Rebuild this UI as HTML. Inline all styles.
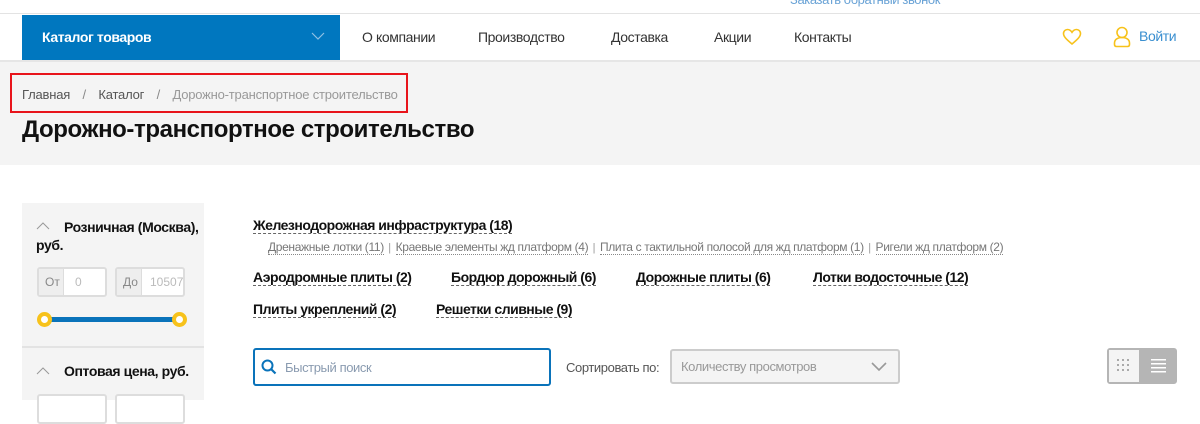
<!DOCTYPE html>
<html><head><meta charset="utf-8"><style>
*{margin:0;padding:0;box-sizing:border-box}
body{width:1200px;height:400px;overflow:hidden;background:#fff;font-family:"Liberation Sans",sans-serif;position:relative;color:#222}
.a{position:absolute;white-space:nowrap}
.n{letter-spacing:-0.4px}
.nav{font-size:14px;color:#333;top:29px}
.cat{font-size:14px;font-weight:bold;border-bottom:1px dashed #666;line-height:16px;letter-spacing:-0.5px;color:#111}
.sub{font-size:12px;color:#777;border-bottom:1px dotted #888;line-height:14px;letter-spacing:-0.35px}
.sep{font-size:11px;color:#999}
</style></head><body>
<div class="a n" style="left:790px;top:-8px;font-size:13px;color:#6aa3d6">Заказать обратный звонок</div>
<div class="a" style="left:0;top:13px;width:1200px;height:1px;background:#e3e3e3"></div>
<div class="a" style="left:22px;top:15px;width:318px;height:45px;background:#0077bf"></div>
<div class="a n" style="left:42px;top:29px;font-size:14px;font-weight:bold;color:#fff">Каталог товаров</div>
<svg class="a" style="left:311px;top:32px" width="14" height="9"><path d="M1 1l6 6 6-6" stroke="#8fc0e4" fill="none" stroke-width="1.2"/></svg>
<div class="a n nav" style="left:362px">О компании</div>
<div class="a n nav" style="left:478px">Производство</div>
<div class="a n nav" style="left:611px">Доставка</div>
<div class="a n nav" style="left:714px">Акции</div>
<div class="a n nav" style="left:794px">Контакты</div>
<svg class="a" style="left:1062px;top:28px" width="20" height="18"><path d="M10 16C4 11 1.5 8.5 1.5 5.5 1.5 3 3.5 1.5 5.5 1.5 7.5 1.5 9 2.8 10 4.3 11 2.8 12.5 1.5 14.5 1.5 16.5 1.5 18.5 3 18.5 5.5 18.5 8.5 16 11 10 16Z" fill="none" stroke="#f7c21b" stroke-width="1.6"/></svg>
<svg class="a" style="left:1113px;top:26px" width="18" height="22"><circle cx="9" cy="6.5" r="5" fill="none" stroke="#f7c21b" stroke-width="1.6"/><path d="M9 11.5C4 11.5 1.5 14 1.5 17v1.5c0 1.2.8 2 2 2h11c1.2 0 2-.8 2-2V17c0-3-2.5-5.5-7.5-5.5Z" fill="none" stroke="#f7c21b" stroke-width="1.6"/></svg>
<div class="a n" style="left:1139px;top:28px;font-size:14px;color:#3a8fd0">Войти</div>
<div class="a" style="left:0;top:60px;width:1200px;height:2px;background:#e6e6e6"></div>
<div class="a" style="left:0;top:62px;width:1200px;height:103px;background:#f4f4f4"></div>
<div class="a" style="left:10px;top:73px;width:398px;height:40px;border:2px solid #e8141b"></div>
<div class="a" style="left:22px;top:87px;font-size:13px;color:#555;letter-spacing:-0.2px">Главная <span style="color:#888;margin:0 9px">/</span> Каталог <span style="color:#888;margin:0 9px">/</span> <span style="color:#999">Дорожно-транспортное строительство</span></div>
<div class="a" style="left:22px;top:116px;font-size:24px;font-weight:bold;color:#111;letter-spacing:-0.4px">Дорожно-транспортное строительство</div>

<div class="a" style="left:22px;top:203px;width:182px;height:197px;background:#f4f4f4"></div>
<div class="a" style="left:22px;top:346px;width:182px;height:2px;background:#e3e3e3"></div>
<svg class="a" style="left:36px;top:222px" width="14" height="8"><path d="M1 7l6-6 6 6" stroke="#999" fill="none"/></svg>
<div class="a n" style="left:64px;top:219px;font-size:14px;font-weight:bold;color:#111">Розничная (Москва),</div>
<div class="a n" style="left:36px;top:237px;font-size:14px;font-weight:bold;color:#111">руб.</div>
<div class="a" style="left:37px;top:267px;width:70px;height:30px;border:2px solid #ddd;border-radius:3px;background:#fff"><div style="width:25px;height:100%;background:#eee;border-right:1px solid #ddd;font-size:12px;color:#888;padding:6px 0 0 6px">От</div><div class="a" style="left:36px;top:6px;font-size:12px;color:#bbb">0</div></div>
<div class="a" style="left:115px;top:267px;width:70px;height:30px;border:2px solid #ddd;border-radius:3px;background:#fff"><div style="width:25px;height:100%;background:#eee;border-right:1px solid #ddd;font-size:12px;color:#888;padding:6px 0 0 6px">До</div><div class="a" style="left:33px;top:6px;font-size:12px;color:#bbb">10507</div></div>
<div class="a" style="left:46px;top:317px;width:136px;height:5px;background:#0a73ba"></div>
<div class="a" style="left:37px;top:312px;width:15px;height:15px;border-radius:50%;border:4px solid #f7c21b;background:#fff"></div>
<div class="a" style="left:172px;top:312px;width:15px;height:15px;border-radius:50%;border:4px solid #f7c21b;background:#fff"></div>
<svg class="a" style="left:36px;top:367px" width="14" height="8"><path d="M1 7l6-6 6 6" stroke="#999" fill="none"/></svg>
<div class="a n" style="left:64px;top:363px;font-size:14px;font-weight:bold;color:#111">Оптовая цена, руб.</div>
<div class="a" style="left:37px;top:394px;width:70px;height:30px;border:2px solid #ddd;border-radius:3px;background:#fff"></div>
<div class="a" style="left:115px;top:394px;width:70px;height:30px;border:2px solid #ddd;border-radius:3px;background:#fff"></div>

<div class="a cat" style="left:253px;top:217px">Железнодорожная инфраструктура (18)</div>
<div class="a" style="left:268px;top:238px">
<span class="sub">Дренажные лотки (11)</span> <span class="sep">|</span> <span class="sub">Краевые элементы жд платформ (4)</span> <span class="sep">|</span> <span class="sub">Плита с тактильной полосой для жд платформ (1)</span> <span class="sep">|</span> <span class="sub">Ригели жд платформ (2)</span></div>
<div class="a cat" style="left:253px;top:269px">Аэродромные плиты (2)</div>
<div class="a cat" style="left:451px;top:269px">Бордюр дорожный (6)</div>
<div class="a cat" style="left:636px;top:269px">Дорожные плиты (6)</div>
<div class="a cat" style="left:813px;top:269px">Лотки водосточные (12)</div>
<div class="a cat" style="left:253px;top:301px">Плиты укреплений (2)</div>
<div class="a cat" style="left:436px;top:301px">Решетки сливные (9)</div>

<div class="a" style="left:253px;top:348px;width:298px;height:38px;border:2px solid #0a73ba;border-radius:3px;background:#fff"></div>
<svg class="a" style="left:261px;top:359px" width="16" height="16"><circle cx="6.5" cy="6.5" r="5" fill="none" stroke="#0a73ba" stroke-width="2"/><path d="M10 10l4.5 4.5" stroke="#0a73ba" stroke-width="2.2"/></svg>
<div class="a n" style="left:285px;top:360px;font-size:13px;color:#8a9bb0">Быстрый поиск</div>
<div class="a n" style="left:566px;top:360px;font-size:13px;color:#555">Сортировать по:</div>
<div class="a" style="left:670px;top:349px;width:230px;height:35px;border:2px solid #ccc;border-radius:3px;background:#f4f4f4"></div>
<div class="a n" style="left:681px;top:359px;font-size:13px;color:#999">Количеству просмотров</div>
<svg class="a" style="left:871px;top:362px" width="16" height="10"><path d="M1 1l7 7 7-7" stroke="#999" fill="none" stroke-width="1.6"/></svg>
<div class="a" style="left:1107px;top:348px;width:70px;height:36px;border:2px solid #b5b5b5;border-radius:3px;background:#b5b5b5"></div>
<div class="a" style="left:1109px;top:350px;width:30px;height:32px;background:#f4f4f4"></div>
<svg class="a" style="left:1116px;top:358px" width="14" height="14" fill="#aaa"><rect x="1" y="1" width="2" height="2"/><rect x="6" y="1" width="2" height="2"/><rect x="11" y="1" width="2" height="2"/><rect x="1" y="6" width="2" height="2"/><rect x="6" y="6" width="2" height="2"/><rect x="11" y="6" width="2" height="2"/><rect x="1" y="11" width="2" height="2"/><rect x="6" y="11" width="2" height="2"/><rect x="11" y="11" width="2" height="2"/></svg>
<svg class="a" style="left:1151px;top:358px" width="15" height="15" fill="#fff"><rect y="1" width="15" height="1.5"/><rect y="5" width="15" height="1.5"/><rect y="9" width="15" height="1.5"/><rect y="13" width="15" height="1.5"/></svg>
</body></html>
